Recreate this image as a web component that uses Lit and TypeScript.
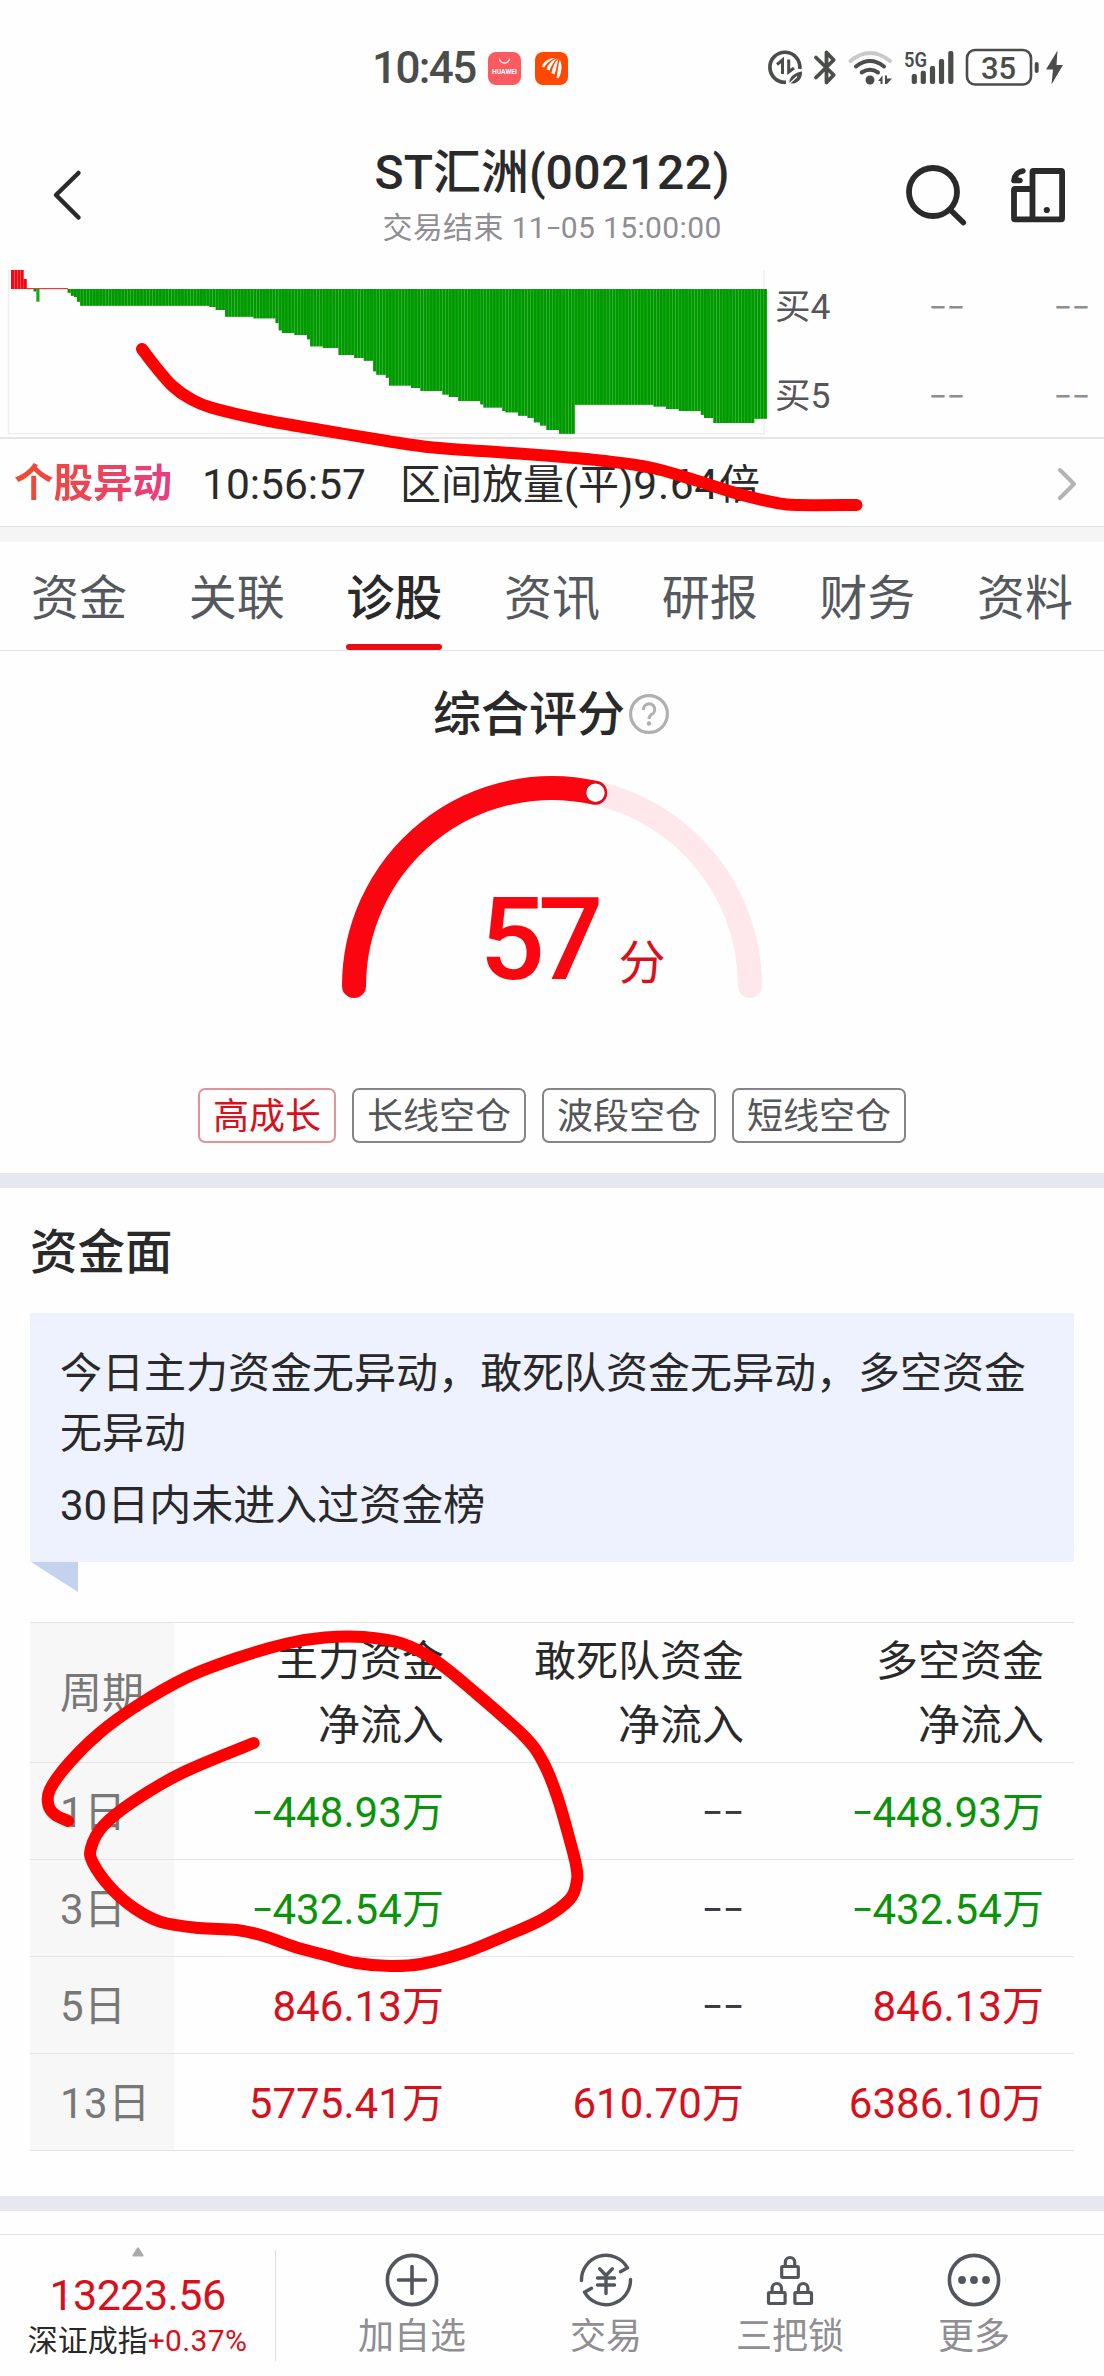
import { LitElement, html, svg, css } from "lit";
import { customElement } from "lit/decorators.js";
import { classMap } from "lit/directives/class-map.js";

type Pt = [number, number];

/** Catmull-Rom spline through the points, as cubic segments. */
function smooth(p: Pt[]): string {
  let d = `M${p[0][0]} ${p[0][1]}`;
  for (let i = 0; i < p.length - 1; i++) {
    const a = p[Math.max(0, i - 1)];
    const b = p[i];
    const c = p[i + 1];
    const e = p[Math.min(p.length - 1, i + 2)];
    d += ` C${b[0] + (c[0] - a[0]) / 6} ${b[1] + (c[1] - a[1]) / 6} ${c[0] - (e[0] - b[0]) / 6} ${c[1] - (e[1] - b[1]) / 6} ${c[0]} ${c[1]}`;
  }
  return d;
}

const underline: Pt[] = [
  [142, 349], [155, 366], [172.5, 386], [190, 398.5], [211, 407.5], [264, 420], [324, 430.5], [387, 441],
  [433, 447.5], [490, 451.5], [552, 456], [605, 461], [650.5, 467.5], [693, 479.5], [738.6, 494], [777, 503], [798.5, 505], [856.5, 505],
];
const loop: Pt[] = [
  [68, 1821], [55.5, 1815], [48.6, 1806], [49.7, 1790], [69, 1763], [99.5, 1733], [138, 1705], [187.5, 1677],
  [237, 1658], [287, 1643.5], [325, 1637.5], [363.5, 1637], [402, 1643.5], [436, 1661], [474.5, 1692], [524, 1736],
  [543, 1762], [557, 1796], [570, 1841], [576, 1865], [577, 1880], [570, 1899], [543, 1919], [505, 1936], [463, 1953],
  [421, 1964], [390, 1966], [356, 1963], [325, 1955], [295, 1947], [264, 1936], [237, 1930], [199, 1928], [161, 1922],
  [134, 1908], [111, 1888], [93, 1863], [91, 1848], [103, 1826], [134, 1801], [184, 1772], [253.7, 1743],
];

/** [right edge x, bottom y] of each run of bars hanging below the zero line. */
const runs: Pt[] = [
  [71.5, 292.7], [74.3, 295.7], [77.4, 297], [80.6, 301.7], [209.8, 305.7], [215.8, 307], [225, 310], [254, 316.7],
  [275.3, 318.3], [278.8, 323], [282, 330.3], [295.7, 333], [307, 335], [310, 339.3], [324, 346.3], [338.7, 348],
  [354, 355], [364.4, 358], [373, 360.7], [376.3, 371.3], [385.8, 374.7], [389, 377.7], [410, 385.5], [422, 388],
  [442.5, 391], [450, 394.5], [458, 397], [481, 401], [484, 404.3], [502, 407.5], [506, 411], [519, 412.3],
  [528, 415.7], [534, 418], [540, 422.3], [546, 425.5], [559, 430], [574.9, 433.7], [654.8, 404.7], [666, 406.5],
  [680, 409], [700.6, 411], [704, 414.7], [713, 418], [754.8, 423], [768, 418.7],
];

const tabs = ["资金", "关联", "诊股", "资讯", "研报", "财务", "资料"];
const tags = ["高成长", "长线空仓", "波段空仓", "短线空仓"];
const rows: [string, string, string, string][] = [
  ["1", "-448.93", "--", "-448.93"],
  ["3", "-432.54", "--", "-432.54"],
  ["5", "846.13", "--", "846.13"],
  ["13", "5775.41", "610.70", "6386.10"],
];

const base = css`
  * { box-sizing: border-box; }
  svg { display: block; flex: none; overflow: visible; }
  .num { letter-spacing: 0.012em; }
  .dash {
    display: inline-block;
    font-family: "Noto Sans CJK SC", sans-serif;
    line-height: 1;
    letter-spacing: 0.155em;
    margin-right: -0.01em;
  }
  .dash i { display: inline-block; font-style: normal; letter-spacing: 0; width: 0.5em; text-align: center; transform: translateY(-0.06em) scaleX(1.45); }
`;

const dashes = (t: string) => html`<span class="dash">${[...t].map((c) => html`<i>${c}</i>`)}</span>`;

@customElement("status-bar")
export class StatusBar extends LitElement {
  static styles = [base, css`
    :host { display: block; }
    .bar { display: flex; align-items: center; height: 136px; padding: 0 36px 0 372px; color: #4b4d4b; }
    .time { width: 116px; font-size: 44px; font-weight: 500; line-height: 60px; letter-spacing: -1.6px; }
    .apps { display: flex; gap: 14px; padding-top: 1px; }
    .right { display: flex; margin-left: auto; }
  `];
  render() {
    const c = "#4b4d4b";
    return html`<div class="bar">
      <span class="time">10:45</span>
      <div class="apps">
        <svg width="33" height="33" viewBox="0 0 33 33">
          <rect width="33" height="33" rx="8" fill="#fb5a60"></rect>
          <path d="M11.5 6.5a5 4.6 0 0 0 10 0" fill="none" stroke="#fff" stroke-width="1.1"></path>
          <text x="4" y="21.5" font-size="7" font-weight="700" fill="#fff" textLength="25" lengthAdjust="spacingAndGlyphs">HUAWEI</text>
        </svg>
        <svg width="33" height="33" viewBox="0 0 33 33">
          <rect width="33" height="33" rx="8" fill="#ff4800"></rect>
          <g fill="#fff">
            <path d="M7 14.500C8.500 9 14 6.400 20 6C15 8.500 11.500 11 9 15.500Z"></path>
            <path d="M11.500 17.500C12.500 12.500 16.500 8.500 22 6.200C18.500 10.500 16.200 14 14.500 18.500Z"></path>
            <path d="M16.500 21C17.500 15 19.700 10 23.500 6.500C22 12 21.500 17 19.500 22.500Z"></path>
            <path d="M21.500 25.500C23 19.500 23 13 24.800 7.500C27.500 13 27 20.500 23.500 26.500Z"></path>
          </g>
        </svg>
      </div>
      <div class="right">
        <svg width="36" height="36" viewBox="768 50 36 36">
          <path d="M786 82.200A15 15 0 1 1 799.800 69" fill="none" stroke=${c} stroke-width="3.700"></path>
          <path d="M777 64.500L782.500 60V74M788.700 59.500V72L794 68" fill="none" stroke=${c} stroke-width="3"></path>
          <path d="M802 71.500C802.500 79 797.500 84.500 789.500 83.500C788.500 77.500 794 72.500 802 71.500Z" fill=${c}></path>
          <path d="M787.500 85.500L797 76.500" stroke="#fff" stroke-width="1.200"></path>
        </svg>
        <svg width="40" height="36" viewBox="804 50 40 36">
          <path d="M816 57.500L833.700 75L826.500 82.500V52.500L833.700 60L816 77.500" fill="none" stroke=${c} stroke-width="3.800" stroke-linecap="round" stroke-linejoin="round"></path>
        </svg>
        <svg width="54" height="36" viewBox="844 50 54 36">
          <g fill="none" stroke-width="4" stroke-linecap="round">
            <path d="M850.500 61Q870 45 890 61" stroke="#c9c9cb"></path>
            <path d="M856 66.500Q870 55.500 884 66.500" stroke=${c}></path>
            <path d="M861.700 72.500Q870 67 878 72.500" stroke=${c}></path>
          </g>
          <circle cx="870" cy="80" r="4.500" fill=${c}></circle>
          <path d="M878 81L882.500 75.500V84H880.500V81ZM885 84V75.500H887V78.500H892L887 84Z" fill=${c}></path>
        </svg>
        <svg width="62" height="36" viewBox="898 50 62 36">
          <text x="904" y="67" font-size="21" font-weight="600" fill=${c} textLength="23" lengthAdjust="spacingAndGlyphs">5G</text>
          ${[[914.3, 74], [923.3, 70.7], [932.5, 66], [941.5, 59], [950.8, 51]].map(([x, y]) =>
            svg`<rect x=${x - 2.6} y=${y} width="5.200" height=${84 - y} rx="2" fill=${c}></rect>`)}
        </svg>
        <svg width="82" height="36" viewBox="960 50 82 36">
          <rect x="967" y="50" width="64" height="34.500" rx="8" fill="none" stroke=${c} stroke-width="2.600"></rect>
          <text x="998.500" y="78.700" font-size="31" font-weight="500" fill=${c} text-anchor="middle">35</text>
          <rect x="1034.700" y="62" width="4" height="11" rx="2" fill=${c}></rect>
        </svg>
        <svg width="26" height="36" viewBox="1042 50 26 36">
          <path d="M1057.500 50.500L1046 69.500H1053L1051.500 84.500L1063 65H1056.500Z" fill=${c}></path>
        </svg>
      </div>
    </div>`;
  }
}

@customElement("stock-nav")
export class StockNav extends LitElement {
  static styles = [base, css`
    :host { display: block; }
    .nav { display: grid; grid-template-columns: 240px 1fr 240px; align-items: center; height: 118px; }
    .back { padding-left: 48px; }
    .mid { text-align: center; white-space: nowrap; }
    .title { font-size: 48px; font-weight: 500; line-height: 60px; color: #2a2a2b; }
    .sub { margin-top: 6px; font-size: 30px; line-height: 38px; color: #8e8e93; }
    .tools { display: flex; gap: 42px; padding-left: 40px; }
  `];
  render() {
    return html`<div class="nav">
      <div class="back">
        <svg width="38" height="56" viewBox="48 167 38 56">
          <path d="M78.500 173L56 195L78.500 217.500" fill="none" stroke="#2a2a2b" stroke-width="4.500" stroke-linecap="round" stroke-linejoin="round"></path>
        </svg>
      </div>
      <div class="mid">
        <div class="title">ST汇洲(<span class="num">002122</span>)</div>
        <div class="sub"><span class="num">交易结束 11${dashes("-")}05 15:00:00</span></div>
      </div>
      <div class="tools">
        <svg width="64" height="56" viewBox="904 167 64 56">
          <circle cx="933" cy="192" r="24" fill="none" stroke="#2a2a2b" stroke-width="5.800"></circle>
          <path d="M951 210.500L963.300 222.500" stroke="#2a2a2b" stroke-width="5.600" stroke-linecap="round"></path>
        </svg>
        <svg width="56" height="56" viewBox="1010 167 56 56">
          <g fill="none" stroke="#2a2a2b" stroke-width="5.800" stroke-linejoin="round">
            <rect x="1032.500" y="171" width="29.600" height="48.300" rx="1"></rect>
            <path d="M1032.500 189H1015Q1014 189 1014 190V218.300Q1014 219.300 1015 219.300H1032.500"></path>
          </g>
          <circle cx="1046.800" cy="210" r="3.100" fill="#2a2a2b"></circle>
          <path d="M1023 171C1017 172 1014 176 1013.800 180.500H1020" fill="none" stroke="#2a2a2b" stroke-width="5.400" stroke-linecap="round" stroke-linejoin="round"></path>
          <path d="M1012 176L1018 174L1019 180Z" fill="#2a2a2b"></path>
        </svg>
      </div>
    </div>`;
  }
}

@customElement("flow-chart")
export class FlowChart extends LitElement {
  static styles = [base, css`
    :host { display: block; }
    .wrap { display: flex; height: 169px; border-bottom: 2px solid #e5e5e9; }
    .book { display: flex; flex-direction: column; flex: 1; gap: 25px; padding-top: 5px; }
    .level { display: grid; grid-template-columns: 154px 125px 1fr; height: 64px; line-height: 64px; font-size: 35.500px; color: #555659; padding-left: 7px; }
    .val { color: #8e8e93; }
  `];
  render() {
    const bars = [];
    for (let i = 0; i < 240; i++) {
      const x = 11 + i * 3.15;
      const mid = x + 1.5;
      if (mid < 68) continue;
      const r = runs.find((q) => mid < q[0]) ?? runs[runs.length - 1];
      bars.push(svg`<rect x=${x} y="289" width="3.150" height=${r[1] - 289} fill="#2fb32f"></rect><rect x=${x} y="289" width="2.700" height=${r[1] - 289} fill="#009a00"></rect>`);
    }
    return html`<div class="wrap">
      <svg width="768" height="165" viewBox="0 270 768 165">
        <path d="M8.500 270V433.700H764V270" fill="none" stroke="#efeff1" stroke-width="1.500"></path>
        <rect x="11" y="270" width="12.700" height="19" fill="#ee0a14"></rect>
        <rect x="23.600" y="279" width="3.200" height="10" fill="#ee0a14"></rect>
        ${[14, 17.2, 20.3].map((x) => svg`<rect x=${x} y="270" width="0.600" height="19" fill="#f77"></rect>`)}
        <rect x="26.800" y="288" width="41.200" height="1.200" fill="#e33b3b"></rect>
        <rect x="33.400" y="289" width="3" height="2.500" fill="#009a00"></rect>
        <rect x="36.300" y="289" width="3.200" height="12.700" fill="#1fa51f"></rect>
        ${bars}
      </svg>
      <div class="book">
        ${["4", "5"].map((n) => html`<div class="level"><span>买<span class="num">${n}</span></span><span class="val">${dashes("--")}</span><span class="val">${dashes("--")}</span></div>`)}
      </div>
    </div>`;
  }
}

@customElement("alert-row")
export class AlertRow extends LitElement {
  static styles = [base, css`
    :host { display: block; }
    .row { display: flex; align-items: center; height: 88px; padding: 3px 27px 0 14px; border-bottom: 1px solid #e0e0e3; font-size: 41px; color: #2a2a2b; white-space: nowrap; line-height: 60px; }
    .tag { width: 188px; font-size: 39.500px; font-weight: 700; }
    .tag span { background: linear-gradient(90deg, #f04c2c, #ea3c84); -webkit-background-clip: text; background-clip: text; color: transparent; }
    .time { width: 198px; padding-top: 2px; font-size: 42.500px; }
    .msg { padding-top: 2px; }
    .msg .num { font-size: 42.500px; letter-spacing: 0.016em; }
    .gap { height: 15px; background: #f5f5f6; }
    svg { margin-left: auto; }
  `];
  render() {
    return html`<div class="row">
        <span class="tag"><span>个股异动</span></span>
        <span class="time">10:56:57</span>
        <span class="msg">区间放量(平)<span class="num">9.64</span>倍</span>
        <svg width="20" height="34" viewBox="0 0 20 34"><path d="M3 3L17 17L3 31" fill="none" stroke="#b3b3b3" stroke-width="4" stroke-linecap="round" stroke-linejoin="round"></path></svg>
      </div>
      <div class="gap"></div>`;
  }
}

@customElement("tab-strip")
export class TabStrip extends LitElement {
  static styles = [base, css`
    :host { display: block; }
    .tabs { display: flex; justify-content: space-between; height: 109px; padding: 0 31px; border-bottom: 1px solid #e3e3e6; }
    .tab { display: flex; flex-direction: column; justify-content: space-between; height: 108px; font-size: 48px; line-height: 102px; padding-top: 6px; color: #55585d; }
    .on { color: #29292a; font-weight: 500; }
    .ink { height: 6px; border-radius: 3px; }
    .tab span { height: 96px; }
    .on .ink { background: #ec0a14; }
  `];
  render() {
    return html`<div class="tabs">${tabs.map((t, i) => html`<div class=${classMap({ tab: true, on: i === 2 })}><span>${t}</span><div class="ink"></div></div>`)}</div>`;
  }
}

@customElement("score-panel")
export class ScorePanel extends LitElement {
  static styles = [base, css`
    :host { display: block; }
    .panel { height: 522px; padding-top: 25px; }
    .head { display: flex; justify-content: center; align-items: center; height: 75px; font-size: 48px; line-height: 77px; font-weight: 500; color: #29292a; padding-right: 2px; }
    .head span { height: 75px; }
    .head svg { margin-left: 4px; }
    .gauge { display: grid; justify-items: center; padding-top: 25px; }
    .gauge > * { grid-area: 1 / 1; }
    .score { display: flex; align-items: baseline; height: 120px; line-height: 120px; margin: 104px 0 0 41px; font-size: 115px; font-weight: 500; color: #fa0510; }
    .score .n { letter-spacing: -0.06em; }
    .unit { margin-left: 22px; font-size: 47px; font-weight: 400; color: #d8101c; }
    .tags { display: flex; justify-content: center; gap: 16px; margin-top: 87px; }
    .tag { height: 55px; padding: 0 13px; border: 2px solid #858587; border-radius: 7px; font-size: 36px; line-height: 55px; color: #55565a; }
    .hot { border-color: #e39297; color: #d8101c; }
    .band { height: 15px; background: #e6e7ef; }
  `];
  render() {
    return html`<div class="panel">
        <div class="head"><span>综合评分</span>
          <svg width="40" height="40" viewBox="0 0 40 40">
            <circle cx="20" cy="20" r="18.400" fill="none" stroke="#b0b0b0" stroke-width="3.200"></circle>
            <path d="M14.600 16A5.600 5.600 0 1 1 22.800 20.300C20.800 21.700 20 22.400 20 25" fill="none" stroke="#b0b0b0" stroke-width="3"></path>
            <circle cx="20" cy="29.500" r="2.200" fill="#b0b0b0"></circle>
          </svg>
        </div>
        <div class="gauge">
          <svg width="420" height="225" viewBox="342 776 420 225">
            <path d="M354 986A198 198 0 0 1 750 986" fill="none" stroke="#ffe8ec" stroke-width="24" stroke-linecap="round"></path>
            <path d="M354 986A198 198 0 0 1 595.200 792.800" fill="none" stroke="#fa0510" stroke-width="24" stroke-linecap="round"></path>
            <circle cx="595.500" cy="792.700" r="10.300" fill="#fff" stroke="#d8101c" stroke-width="2.200"></circle>
          </svg>
          <div class="score"><span class="n">57</span><span class="unit">分</span></div>
        </div>
        <div class="tags">${tags.map((t, i) => html`<span class=${classMap({ tag: true, hot: i === 0 })}>${t}</span>`)}</div>
      </div>
      <div class="band"></div>`;
  }
}

@customElement("fund-panel")
export class FundPanel extends LitElement {
  static styles = [base, css`
    :host { display: block; }
    .panel { height: 1008px; padding: 0 30px; }
    .h { height: 125px; line-height: 130px; font-size: 47.500px; font-weight: 500; color: #29292a; }
    .note { height: 249px; padding: 31px 30px 0; background: #eef2ff; font-size: 42px; line-height: 60px; color: #29292a; }
    .note p { margin: 0 0 12px; }
    .tail { display: block; }
    .table { margin-top: 30px; border-top: 1px solid #e4e4e6; }
    .r { display: grid; grid-template-columns: 144px repeat(3, 300px); height: 97px; border-bottom: 1px solid #e4e4e6; font-size: 42px; line-height: 64px; align-items: stretch; }
    .hr { height: 140px; }
    .c { display: flex; align-items: center; justify-content: flex-end; padding: 3px 30px 0 0; text-align: right; color: #29292a; white-space: nowrap; }
    .first { justify-content: flex-start; padding: 3px 0 0 30px; background: #f7f7f8; color: #777877; }
    .up { color: #d8101c; }
    .down { color: #0c930c; }
    .none { color: #3a3a46; }
    .val { font-size: 42px; letter-spacing: 0.002em; }
    .band { height: 15px; background: #e6e7ef; }
  `];
  cell(v: string) {
    if (v === "--") return html`<div class="c none"><span>${dashes(v)}</span></div>`;
    const neg = v[0] === "-";
    return html`<div class=${classMap({ c: true, up: !neg, down: neg })}><span>${neg ? dashes("-") : ""}<span class="val">${neg ? v.slice(1) : v}</span>万</span></div>`;
  }
  render() {
    return html`<div class="panel">
        <div class="h">资金面</div>
        <div class="note"><p>今日主力资金无异动，敢死队资金无异动，多空资金无异动</p><p>30日内未进入过资金榜</p></div>
        <svg class="tail" width="48" height="30"><path d="M1 0H48V30Z" fill="#c5d2ed"></path></svg>
        <div class="table">
          <div class="r hr"><div class="c first">周期</div>${["主力资金", "敢死队资金", "多空资金"].map((t) => html`<div class="c"><span>${t}<br />净流入</span></div>`)}</div>
          ${rows.map(([d, ...v]) => html`<div class="r"><div class="c first"><span class="num">${d}</span>日</div>${v.map((x) => this.cell(x))}</div>`)}
        </div>
      </div>
      <div class="band"></div>`;
  }
}

@customElement("bottom-bar")
export class BottomBar extends LitElement {
  static styles = [base, css`
    :host { display: block; padding-top: 23px; }
    .bar { display: flex; height: 142px; border-top: 1px solid #e3e3e6; }
    .index { display: flex; flex-direction: column; align-items: center; width: 275px; padding-top: 12px; white-space: nowrap; }
    .price { margin-top: 14px; font-size: 43px; line-height: 48px; color: #d8101c; letter-spacing: -0.013em; }
    .name { font-size: 30px; line-height: 36px; margin-top: 4px; color: #29292a; }
    .chg { color: #d8101c; }
    .sep { width: 1px; height: 111px; margin-top: 15px; background: #dedee1; }
    .acts { display: grid; grid-template-columns: 204px repeat(3, 184px); padding-left: 34px; }
    .act { display: flex; flex-direction: column; align-items: center; padding-top: 18px; font-size: 36px; line-height: 48px; color: #8e8e93; gap: 6px; }
  `];
  lock(x: number, y: number) {
    return svg`<rect x=${x - 8.3} y=${y} width="16.600" height="11" rx="0.800"></rect><path d=${`M${x - 4.7} ${y}V${y - 4}A4.700 5 0 0 1 ${x + 4.7} ${y - 4}V${y}`}></path>`;
  }
  render() {
    const s = "#54565d";
    return html`<div class="bar">
      <div class="index">
        <svg width="12" height="10"><path d="M5 1Q6 -0.500 7 1L11.500 8Q12 9.500 10.500 9.500H1.500Q0 9.500 0.500 8Z" fill="#aaa"></path></svg>
        <div class="price">13223.56</div>
        <div class="name">深证成指<span class="chg num">+0.37%</span></div>
      </div>
      <div class="sep"></div>
      <div class="acts">
        <div class="act">
          <svg width="54" height="54" viewBox="0 0 54 54" fill="none" stroke=${s} stroke-width="3.600" stroke-linecap="round"><circle cx="27" cy="27" r="24.600"></circle><path d="M27 13.500V40.500M13.500 27H40.500"></path></svg>
          加自选
        </div>
        <div class="act">
          <svg width="54" height="54" viewBox="579 2254 54 54" fill="none" stroke=${s} stroke-width="3.400" stroke-linecap="round" stroke-linejoin="round">
            <path d="M581.500 2281.500A24.600 24.600 0 0 1 627.500 2268.800L620.500 2272.700M630.500 2280.500A24.600 24.600 0 0 1 584.500 2293.200L591.500 2289.300"></path>
            <path d="M599.700 2269.800L606 2276.500L612.300 2269.800M606 2276.500V2294.500M597.500 2279H614.500M597.500 2286H614.500"></path>
          </svg>
          交易
        </div>
        <div class="act">
          <svg width="54" height="54" viewBox="763 2254 54 54" fill="none" stroke=${s} stroke-width="3.200" stroke-linejoin="round">${this.lock(790, 2267.5)}${this.lock(776.8, 2293.5)}${this.lock(803.2, 2293.5)}</svg>
          三把锁
        </div>
        <div class="act">
          <svg width="54" height="54" viewBox="0 0 54 54"><circle cx="27" cy="27" r="24.600" fill="none" stroke=${s} stroke-width="3.600"></circle>${[15, 27, 39].map((x) => svg`<circle cx=${x} cy="27" r="3.900" fill=${s}></circle>`)}</svg>
          更多
        </div>
      </div>
    </div>`;
  }
}

@customElement("app-root")
export class AppRoot extends LitElement {
  static styles = css`
    :host { display: block; position: relative; width: 1104px; height: 2376px; overflow: hidden; background: #fefefe; font-family: Roboto, "Noto Sans CJK SC", sans-serif; }
    .chart { padding-top: 1px; }
    flow-chart { margin-top: 15px; }
    .ink { position: absolute; left: 0; top: 0; display: block; pointer-events: none; }
  `;
  render() {
    return html`
      <status-bar></status-bar>
      <stock-nav></stock-nav>
      <div class="chart"><flow-chart></flow-chart></div>
      <alert-row></alert-row>
      <tab-strip></tab-strip>
      <score-panel></score-panel>
      <fund-panel></fund-panel>
      <bottom-bar></bottom-bar>
      <svg class="ink" width="1104" height="2376" viewBox="0 0 1104 2376" fill="none" stroke="#ff0000" stroke-width="12" stroke-linecap="round" stroke-linejoin="round">
        <path d=${smooth(underline)}></path>
        <path d=${smooth(loop)}></path>
      </svg>`;
  }
}
